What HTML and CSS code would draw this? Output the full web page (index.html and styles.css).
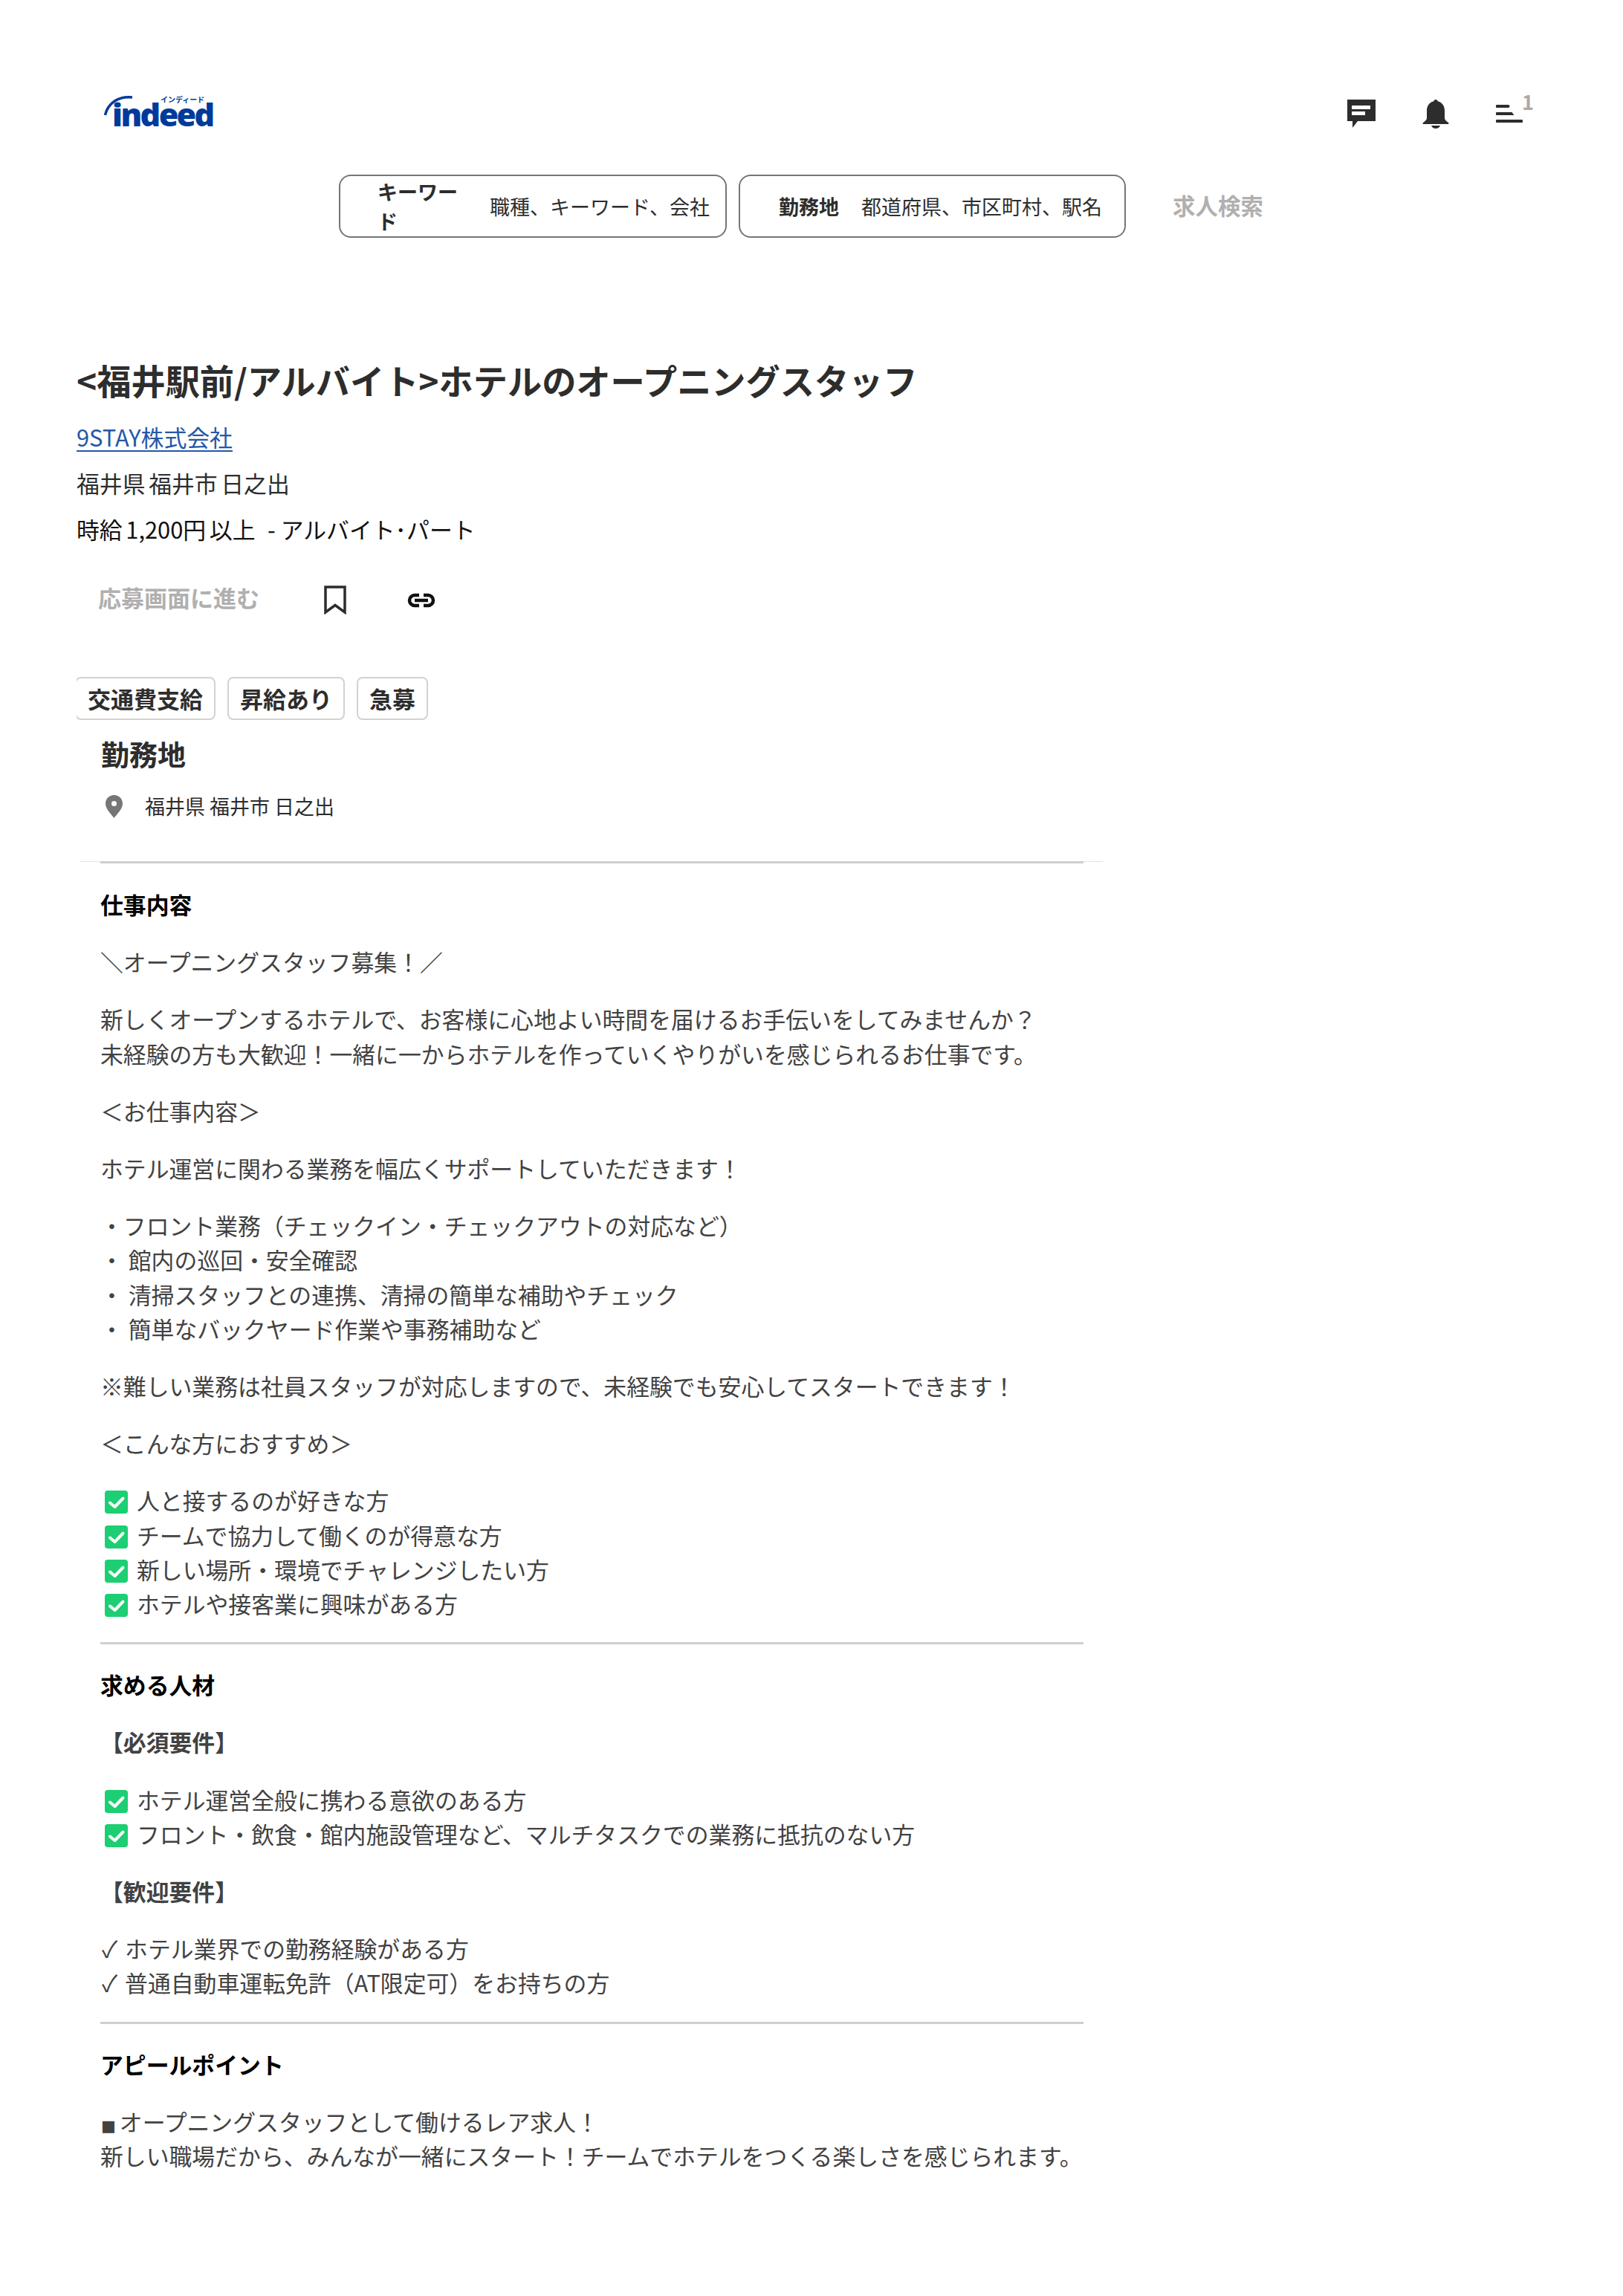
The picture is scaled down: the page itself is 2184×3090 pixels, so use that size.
FILE: index.html
```html
<!DOCTYPE html>
<html lang="ja">
<head>
<meta charset="utf-8">
<title>ホテルのオープニングスタッフ</title>
<link rel="stylesheet" href="styles.css">
</head>
<body>

<svg class="defs" width="0" height="0">
 <symbol id="tick" viewBox="0 0 31 31">
  <rect width="31" height="31" rx="4" fill="#1ccf72"/>
  <path d="M7 16.500l6.500 5.500L24.500 10.500" fill="none" stroke="#fff" stroke-width="4" stroke-linecap="round" stroke-linejoin="round"/>
 </symbol>
</svg>

<header class="top">
 <div class="top-row">
  <a class="logo">
   <svg class="logo-arc" width="40" height="30" viewBox="0 0 40 30"><path d="M1.500 28C5 12 19 2 38 4" fill="none" stroke="#003a9b" stroke-width="3.500"/></svg>
   <span class="logo-kana">インディード</span>
   <span class="logo-word">indeed</span>
  </a>
  <nav class="top-icons">
   <svg width="38" height="38" viewBox="0 0 38 38"><path d="M0 0h38v29H14l-7 9v-9H0z" fill="#2d2d2d"/><path d="M6 8h25v5H6zM6 16h18v5H6z" fill="#fff"/></svg>
   <svg width="36" height="39" viewBox="0 0 36 39"><path d="M18 0c1.600 0 2.500 1 2.800 2.300C27 4 30 9 30 15v10c0 2 2 4 5 6 1 .7.600 2-.600 2H1.600c-1.200 0-1.600-1.300-.600-2 3-2 5-4 5-6V15C6 9 9 4 15.200 2.300 15.500 1 16.400 0 18 0zM12 35h12c-1 2.500-3.300 4-6 4s-5-1.500-6-4z" fill="#2d2d2d"/></svg>
   <span class="menu-icon">
    <svg width="36" height="24" viewBox="0 0 36 24"><path d="M1.500 0h15a2 2 0 0 1 0 4h-15a2 2 0 0 1 0-4zM1.500 10h20l3 4h-23a2 2 0 0 1 0-4zM1.500 20h33a2 2 0 0 1 0 4h-33a2 2 0 0 1 0-4z" fill="#2d2d2d"/></svg>
    <span class="menu-count">1</span>
   </span>
  </nav>
 </div>
 <form class="search">
  <div class="search-box search-box-first">
   <span class="search-label search-label-narrow">キーワード</span>
   <span class="search-hint">職種、キーワード、会社</span>
  </div>
  <div class="search-box">
   <span class="search-label">勤務地</span>
   <span class="search-hint">都道府県、市区町村、駅名</span>
  </div>
  <span class="search-btn">求人検索</span>
 </form>
</header>

<main class="job">
 <h1 class="job-title">&lt;福井駅前/アルバイト&gt;ホテルのオープニングスタッフ</h1>
 <div class="job-line"><a class="company">9STAY株式会社</a></div>
 <div class="job-line">福井県 福井市 日之出</div>
 <div class="job-line job-pay">時給 1,200円 以上 <span class="pay-type">- アルバイト･パート</span></div>

 <div class="actions">
  <span class="apply">応募画面に進む</span>
  <svg class="save" width="30" height="39" viewBox="0 0 30 39"><path d="M2 2h26v34l-13-9.500L2 36z" fill="none" stroke="#2d2d2d" stroke-width="3.500"/></svg>
  <svg class="share" width="38" height="20" viewBox="0 0 38 20"><path d="M16 3H10a7 7 0 0 0 0 14h6M22 3h6a7 7 0 0 1 0 14h-6" fill="none" stroke="#111" stroke-width="4.500"/><path d="M10 10h18" stroke="#111" stroke-width="4.500"/></svg>
 </div>

 <div class="tags">
  <span class="tag tag-first">交通費支給</span>
  <span class="tag">昇給あり</span>
  <span class="tag">急募</span>
 </div>

 <section class="place">
  <h2 class="place-title">勤務地</h2>
  <div class="place-row">
   <svg width="23" height="31" viewBox="0 0 23 31"><path fill-rule="evenodd" d="M11.500 0C5 0 0 5 0 11.500 0 19 8 26 11.500 31 15 26 23 19 23 11.500 23 5 18 0 11.500 0zm0 8a3.500 3.500 0 1 1 0 7 3.500 3.500 0 0 1 0-7z" fill="#767676"/></svg>
   <span>福井県 福井市 日之出</span>
  </div>
 </section>

 <div class="rule-light"></div>

 <section class="desc">
  <hr class="rule">
  <h3>仕事内容</h3>
  <p>＼オープニングスタッフ募集！／</p>
  <p>新しくオープンするホテルで、お客様に心地よい時間を届けるお手伝いをしてみませんか？<br>未経験の方も大歓迎！一緒に一からホテルを作っていくやりがいを感じられるお仕事です。</p>
  <p>＜お仕事内容＞</p>
  <p>ホテル運営に関わる業務を幅広くサポートしていただきます！</p>
  <p>・フロント業務（チェックイン・チェックアウトの対応など）<br>・ 館内の巡回・安全確認<br>・ 清掃スタッフとの連携、清掃の簡単な補助やチェック<br>・ 簡単なバックヤード作業や事務補助など</p>
  <p>※難しい業務は社員スタッフが対応しますので、未経験でも安心してスタートできます！</p>
  <p>＜こんな方におすすめ＞</p>
  <p>
   <svg class="tick"><use href="#tick"/></svg>人と接するのが好きな方<br>
   <svg class="tick"><use href="#tick"/></svg>チームで協力して働くのが得意な方<br>
   <svg class="tick"><use href="#tick"/></svg>新しい場所・環境でチャレンジしたい方<br>
   <svg class="tick"><use href="#tick"/></svg>ホテルや接客業に興味がある方
  </p>
  <hr class="rule">
  <h3>求める人材</h3>
  <p class="sub">【必須要件】</p>
  <p>
   <svg class="tick"><use href="#tick"/></svg>ホテル運営全般に携わる意欲のある方<br>
   <svg class="tick"><use href="#tick"/></svg>フロント・飲食・館内施設管理など、マルチタスクでの業務に抵抗のない方
  </p>
  <p class="sub">【歓迎要件】</p>
  <p><span class="mark-check">✓</span>ホテル業界での勤務経験がある方<br><span class="mark-check">✓</span>普通自動車運転免許（AT限定可）をお持ちの方</p>
  <hr class="rule">
  <h3>アピールポイント</h3>
  <p><span class="mark-square">■</span>オープニングスタッフとして働けるレア求人！<br>新しい職場だから、みんなが一緒にスタート！チームでホテルをつくる楽しさを感じられます。</p>
 </section>
</main>

</body>
</html>
```

FILE: styles.css
```css
body {
 margin: 0;
 background: #fff;
 color: #2d2d2d;
 font-family: "Noto Sans CJK JP", "Noto Sans", sans-serif;
 font-size: 30.850px;
 line-height: 46.200px;
}
.defs {
 display: block;
 height: 0;
}

/* header */
.top-row {
 display: flex;
 justify-content: space-between;
 align-items: center;
 height: 66px;
 padding: 120px 135px 0 140px;
}
.logo {
 display: block;
 position: relative;
 width: 150px;
 height: 44px;
 color: #003a9b;
}
.logo-arc {
 position: absolute;
 left: 0;
 top: -4px;
}
.logo-kana {
 position: absolute;
 left: 76px;
 top: -3px;
 font-size: 10px;
 line-height: 12px;
 font-weight: 700;
}
.logo-word {
 position: absolute;
 left: 11px;
 top: 3px;
 font-family: "Open Sans", sans-serif;
 font-size: 43px;
 line-height: 40px;
 font-weight: 800;
 letter-spacing: -2.600px;
}
.top-icons {
 display: flex;
 align-items: center;
 gap: 63px;
}
.menu-icon {
 position: relative;
 display: block;
 height: 24px;
}
.menu-icon svg {
 display: block;
}
.menu-count {
 position: absolute;
 left: 35px;
 top: -21px;
 font-size: 27px;
 line-height: 34px;
 font-weight: 700;
 color: #aaa;
}
.search {
 display: flex;
 align-items: center;
 gap: 16px;
 margin: 49px 0 0 456px;
}
.search-box {
 display: flex;
 align-items: center;
 box-sizing: border-box;
 width: 521px;
 height: 85px;
 padding-left: 52px;
 border: 2px solid #767676;
 border-radius: 16px;
 font-size: 27px;
 line-height: 40px;
}
.search-box-first {
 width: 522px;
 padding-left: 50px;
}
.search-label {
 font-weight: 700;
 margin-right: 30px;
 white-space: nowrap;
}
.search-label-narrow {
 width: 120px;
 white-space: normal;
 margin-right: 31px;
}
.search-btn {
 margin-left: 47px;
 margin-top: -2px;
 font-size: 30.500px;
 font-weight: 700;
 color: #b0b0b0;
}

/* job head */
.job {
 padding: 0 0 0 103px;
}
.job-title {
 margin: 158px 0 21px;
 font-size: 46.200px;
 line-height: 66px;
 font-weight: 700;
}
.job-line {
 margin-bottom: 16px;
 line-height: 46px;
 word-spacing: -2.300px;
}
.job-pay {
 color: #111;
}
.pay-type {
 margin-left: 12px;
 word-spacing: 0;
}
.company {
 color: #2557a7;
 text-decoration: underline;
 text-underline-offset: 5px;
 text-decoration-thickness: 2px;
}
.actions {
 display: flex;
 align-items: center;
 height: 60px;
 margin-top: 41px;
}
.apply {
 margin: 0 0 4px 29px;
 font-size: 31px;
 font-weight: 700;
 color: #b0b0b0;
}
.save {
 margin: 3px 0 0 87px;
}
.share {
 margin: 3px 0 0 82px;
}
.tags {
 display: flex;
 gap: 16px;
 margin-top: 75px;
 overflow: hidden;
}
.tag {
 box-sizing: border-box;
 height: 58px;
 padding: 0 15px;
 border: 2px solid #d4d2d0;
 border-radius: 8px;
 font-size: 31px;
 line-height: 54px;
 font-weight: 700;
}
.tag-first {
 margin-left: -2px;
}

/* location */
.place {
 padding-left: 33px;
}
.place-title {
 margin: 18px 0 0;
 font-size: 38px;
 line-height: 54px;
 font-weight: 700;
}
.place-row {
 display: flex;
 align-items: center;
 gap: 30px;
 margin: 24px 0 0 6px;
 font-size: 27px;
 line-height: 40px;
}
.rule-light {
 width: 1376px;
 height: 1px;
 margin: 54px 0 0 5px;
 background: #e4e2e0;
}

/* description */
.desc {
 width: 1323px;
 margin-left: 32px;
 color: #424242;
}
.rule {
 height: 3px;
 margin: 29px 0 31px;
 border: 0;
 background: #cfcfcf;
}
.desc .rule:first-child {
 margin-top: -1px;
 margin-bottom: 32px;
}
.desc h3 {
 margin: 0 0 31px;
 font-size: 30.850px;
 line-height: 46.200px;
 font-weight: 700;
 color: #000;
}
.desc p {
 margin: 0 0 31px;
 white-space: nowrap;
}
.desc p:has(+ .rule) {
 margin-bottom: 0;
}
.desc .sub {
 font-weight: 700;
}
.tick {
 width: 31px;
 height: 31px;
 margin: 0 12px 0 6px;
 vertical-align: -5px;
}
.mark-check {
 margin: 0 10px 0 2px;
}
.mark-square {
 font-family: "DejaVu Sans", sans-serif;
 font-size: 21px;
 line-height: 0;
 margin: 0 5px 0 1px;
}
```
